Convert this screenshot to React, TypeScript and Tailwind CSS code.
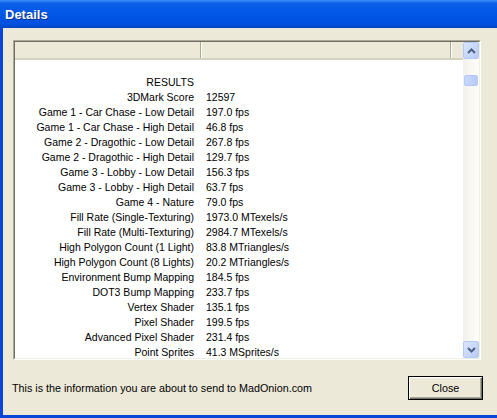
const rows: [string, string][] = [
  ['RESULTS', ''],
  ['3DMark Score', '12597'],
  ['Game 1 - Car Chase - Low Detail', '197.0 fps'],
  ['Game 1 - Car Chase - High Detail', '46.8 fps'],
  ['Game 2 - Dragothic - Low Detail', '267.8 fps'],
  ['Game 2 - Dragothic - High Detail', '129.7 fps'],
  ['Game 3 - Lobby - Low Detail', '156.3 fps'],
  ['Game 3 - Lobby - High Detail', '63.7 fps'],
  ['Game 4 - Nature', '79.0 fps'],
  ['Fill Rate (Single-Texturing)', '1973.0 MTexels/s'],
  ['Fill Rate (Multi-Texturing)', '2984.7 MTexels/s'],
  ['High Polygon Count (1 Light)', '83.8 MTriangles/s'],
  ['High Polygon Count (8 Lights)', '20.2 MTriangles/s'],
  ['Environment Bump Mapping', '184.5 fps'],
  ['DOT3 Bump Mapping', '233.7 fps'],
  ['Vertex Shader', '135.1 fps'],
  ['Pixel Shader', '199.5 fps'],
  ['Advanced Pixel Shader', '231.4 fps'],
  ['Point Sprites', '41.3 MSprites/s'],
];

function ScrollButton({ up }: { up: boolean }) {
  return (
    <div className="h-[17px] w-[16px] rounded-[2px] border border-[#b4c8f6] bg-gradient-to-br from-[#dbe6ff] to-[#b7cbf8] flex items-center justify-center">
      <svg width="9" height="6" viewBox="0 0 9 6">
        <path
          d={up ? 'M1 5 L4.5 1.5 L8 5' : 'M1 1 L4.5 4.5 L8 1'}
          fill="none"
          stroke="#4d6185"
          strokeWidth="2"
        />
      </svg>
    </div>
  );
}

export default function App() {
  return (
    <div
      className="w-[497px] h-[418px] bg-[#ece9d8] flex flex-col overflow-hidden text-black"
      style={{ fontFamily: '"Liberation Sans", Arial, sans-serif' }}
    >
      {/* Title bar */}
      <div className="h-[28px] shrink-0 bg-[linear-gradient(to_bottom,#3d8ff5_0%,#0b5fea_12%,#0056e6_50%,#0051df_85%,#0043c2_100%)] flex items-center pl-[5px] pt-[2px]">
        <span className="text-white font-bold text-[13px] [text-shadow:1px_1px_0_#0a2f8a]">Details</span>
      </div>

      {/* Body */}
      <div className="flex-1 flex flex-col border-l-[3px] border-b-[3px] border-[#0846d8]">
        {/* List panel */}
        <div className="ml-[10px] mt-[12px] w-[468px] h-[320px] border-t border-l border-[#aca899] border-b border-r border-b-white border-r-white">
          <div className="w-full h-full border-t border-l border-[#716f64] border-b border-r border-b-[#f1efe2] border-r-[#f1efe2] bg-white flex">
            <div className="flex-1 flex flex-col overflow-hidden">
              {/* Header */}
              <div className="h-[18px] shrink-0 flex bg-[#ece9d8] border-b-2 border-[#d6d2c2]">
                <div className="w-[186px] border-r border-[#aca899]" />
                <div className="w-[1px] bg-white" />
                <div className="w-[249px] border-r border-[#aca899]" />
                <div className="w-[1px] bg-white" />
                <div className="flex-1" />
              </div>
              {/* Rows */}
              <div className="pt-[15px] text-[10.5px] leading-[15px]">
                {rows.map(([label, value]) => (
                  <div key={label} className="h-[15px] flex whitespace-nowrap">
                    <div className="w-[179px] text-right">{label}</div>
                    <div className="pl-[12px]">{value}</div>
                  </div>
                ))}
              </div>
            </div>
            {/* Scrollbar */}
            <div className="w-[16px] shrink-0 bg-gradient-to-r from-[#f3f1ec] to-[#fefefb] flex flex-col">
              <ScrollButton up />
              <div className="flex-1">
                <div className="mt-[16px] mx-[1px] h-[11px] rounded-[2px] border border-[#b4c8f6] bg-gradient-to-r from-[#c9d8fc] to-[#b7cbf8]" />
              </div>
              <ScrollButton up={false} />
            </div>
          </div>
        </div>

        {/* Footer */}
        <div className="flex items-center justify-between ml-[9px] mr-[14px] mt-[16px]">
          <span className="text-[10.75px]">This is the information you are about to send to MadOnion.com</span>
          <button className="w-[75px] h-[24px] border border-black bg-[#ece9d8] text-[10.75px] shadow-[inset_1px_1px_0_#ffffff,inset_-1px_-1px_0_#716f64,inset_-2px_-2px_0_#aca899]">
            Close
          </button>
        </div>
      </div>
    </div>
  );
}
